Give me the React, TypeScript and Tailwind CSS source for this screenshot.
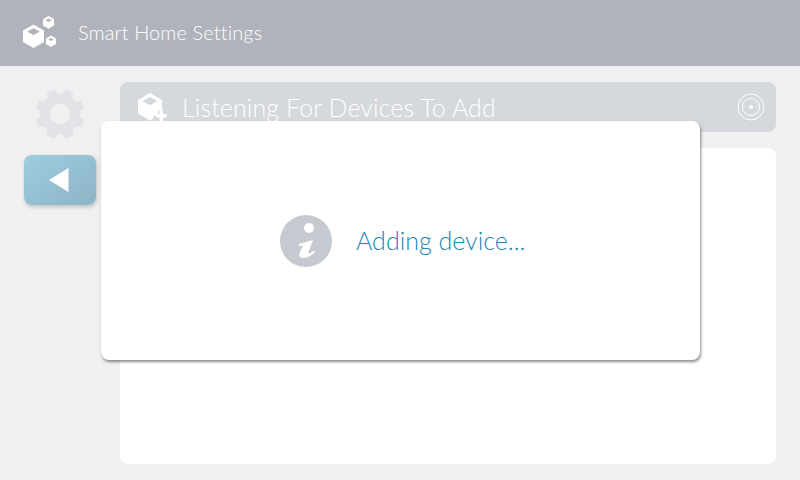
const gearPath = (() => {
  const cx = 26;
  const cy = 25;
  const pt = (r: number, deg: number) => {
    const a = (deg * Math.PI) / 180;
    return `${(cx + r * Math.cos(a)).toFixed(2)} ${(cy + r * Math.sin(a)).toFixed(2)}`;
  };
  let d = "";
  for (let i = 0; i < 8; i++) {
    const c = 22.5 + i * 45;
    d += `${i === 0 ? "M" : "L"}${pt(19.5, c - 15)} L${pt(24.5, c - 8)} L${pt(24.5, c + 8)} L${pt(19.5, c + 15)} `;
  }
  return d + "Z";
})();

export default function App() {
  return (
    <div className="relative flex h-[480px] w-[800px] flex-col overflow-hidden bg-[#f0f0f0] font-['Lato',sans-serif]">
      <header className="flex h-[66px] shrink-0 items-center bg-[#b0b3bb] pl-[22px]">
        <svg width="34" height="34" viewBox="0 0 34 34" className="mr-[22px]" fill="#fff">
          <path fillRule="evenodd" d="M11.5 8.5 22 14.5V26L11.5 32 1 26V14.5ZM11.5 12.2 5.2 15.6 11.5 19.2 17.8 15.6Z" />
          <path fillRule="evenodd" d="M26.5 0 32 3.2V9.6L26.5 12.8 21 9.6V3.2ZM26.5 2.6 23.4 4.3 26.5 6.1 29.6 4.3Z" />
          <path fillRule="evenodd" d="M29 19.5 34 22.4V28L29 30.9 24 28V22.4ZM29 22 26.4 23.4 29 24.9 31.6 23.4Z" />
        </svg>
        <span className="pb-[2px] text-[20px] font-light leading-none tracking-[0.1px] text-white">Smart Home Settings</span>
      </header>
      <div className="flex min-h-0 flex-1">
        <aside className="flex w-[120px] shrink-0 flex-col items-start pl-[24px] pt-[23px]">
          <svg width="52" height="50" viewBox="0 0 52 50" className="ml-[10px]" fill="#e1e3e7">
            <path fillRule="evenodd" stroke="#e1e3e7" strokeWidth="1.5" strokeLinejoin="round" d={`${gearPath} M26 14A11 11 0 1 0 26 36 11 11 0 1 0 26 14Z`} />
          </svg>
          <button className="mt-[16px] flex h-[50px] w-[72px] items-center justify-center rounded-[8px] bg-gradient-to-br from-[#9dcde0] to-[#8db4c5] pr-[2px] shadow-[1px_2px_4px_rgba(0,0,0,0.2)]">
            <svg width="20" height="24" viewBox="0 0 20 24" fill="#fff">
              <path d="M0 12 19.500 0V24Z" />
            </svg>
          </button>
        </aside>
        <main className="flex min-w-0 flex-1 flex-col gap-4 pb-4 pr-6 pt-4">
          <div className="flex h-[50px] shrink-0 items-center rounded-[8px] bg-[#d5d8dc] pl-4 pr-[11px]">
            <svg width="32" height="30" viewBox="0 0 32 30" fill="#fff" className="mr-[14px]">
              <path fillRule="evenodd" d="M14 1 26 8V18.500H22V24H17.500V26.500L14 28.500 2 21.500V8ZM14 5 6.500 9 14 13.300 21.500 9Z" />
              <path d="M23.500 18.500H27V22H30.500V25.500H27V29H23.500V25.500H20V22H23.500Z" />
            </svg>
            <span className="flex-1 text-[25px] font-light leading-none tracking-[0.1px] text-white">Listening For Devices To Add</span>
            <svg width="28" height="28" viewBox="0 0 28 28" fill="none" stroke="#fff" strokeWidth="1">
              <circle cx="14" cy="14" r="13" />
              <circle cx="14" cy="14" r="8.500" />
              <circle cx="14" cy="14" r="2" fill="#fff" stroke="none" />
            </svg>
          </div>
          <div className="min-h-0 flex-1 rounded-[8px] bg-white" />
        </main>
      </div>
      <div className="absolute left-[101px] top-[121px] flex h-[239px] w-[599px] items-center rounded-[8px] bg-white pl-[179px] shadow-[1px_2px_3px_rgba(0,0,0,0.45)]">
        <div className="mr-[24px] flex h-[52px] w-[52px] items-center justify-center rounded-full bg-[#c5cad0]">
          <svg width="24" height="38" viewBox="0 0 24 38" fill="#fff">
            <circle cx="15" cy="6" r="5" />
            <path d="M5 22 19 18 14.500 30C14 31.500 15 32 16.500 31L20 28.500 21 30C17 34 13 36 9.500 36 5.500 36 4.500 33.500 5.500 31L9 23.500 5 24Z" />
          </svg>
        </div>
        <span className="text-[25px] font-light leading-none text-[#1d86b4]">Adding device...</span>
      </div>
    </div>
  );
}
